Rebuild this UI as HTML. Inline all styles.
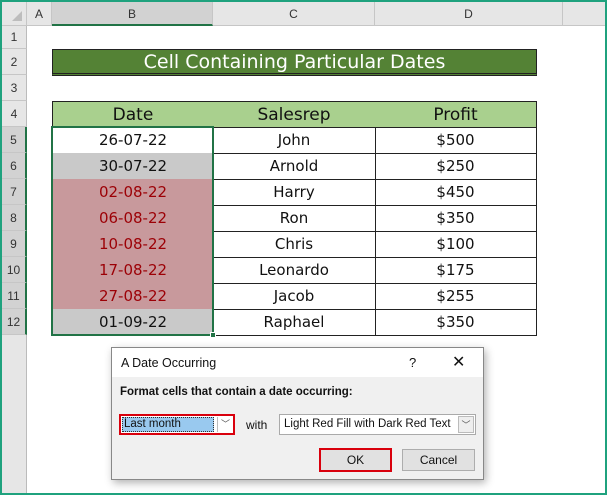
<!DOCTYPE html>
<html><head><meta charset="utf-8"><style>
*{margin:0;padding:0;box-sizing:border-box}
body{width:607px;height:495px;position:relative;overflow:hidden;background:#fff;font-family:"Liberation Sans",sans-serif}
.a{position:absolute}
.frame{left:0;top:0;width:607px;height:495px;border:2px solid #1fa27e;z-index:50;pointer-events:none}
.ch{top:2px;height:24px;background:#e6e6e6;border-bottom:1px solid #c6c6c6;border-right:1px solid #c6c6c6;font-size:12px;color:#333;text-align:center;line-height:24px}
.rh{left:2px;width:25px;background:#e6e6e6;border-bottom:1px solid #c6c6c6;border-right:1px solid #bbb;font-size:12px;color:#333;text-align:center}
.c{font-family:"Comic Sans MS","DejaVu Sans",sans-serif;font-size:15px;text-align:center;border-right:1px solid #222;border-bottom:1px solid #222;color:#111}
.dlg{font-family:"Liberation Sans",sans-serif;font-size:12px;color:#111}
</style></head><body>
<div class="a frame"></div>
<!-- column headers -->
<div class="a ch" style="left:2px;width:25px"></div>
<div class="a" style="left:12px;top:11px;width:0;height:0;border-left:10px solid transparent;border-bottom:10px solid #bdbdbd"></div>
<div class="a ch" style="left:27px;width:25px">A</div>
<div class="a ch" style="left:52px;width:161px;background:#d2d2d2;border-bottom:2px solid #217346">B</div>
<div class="a ch" style="left:213px;width:162px">C</div>
<div class="a ch" style="left:375px;width:188px">D</div>
<div class="a ch" style="left:563px;width:42px;border-right:none"></div>
<!-- row headers -->
<div class="a rh" style="top:26px;height:23px;line-height:23px">1</div>
<div class="a rh" style="top:49px;height:26px;line-height:26px">2</div>
<div class="a rh" style="top:75px;height:26px;line-height:26px">3</div>
<div class="a rh" style="top:101px;height:26px;line-height:26px">4</div>
<div class="a rh" style="top:127px;height:26px;line-height:26px;background:#d2d2d2;border-right:2px solid #217346">5</div>
<div class="a rh" style="top:153px;height:26px;line-height:26px;background:#d2d2d2;border-right:2px solid #217346">6</div>
<div class="a rh" style="top:179px;height:26px;line-height:26px;background:#d2d2d2;border-right:2px solid #217346">7</div>
<div class="a rh" style="top:205px;height:26px;line-height:26px;background:#d2d2d2;border-right:2px solid #217346">8</div>
<div class="a rh" style="top:231px;height:26px;line-height:26px;background:#d2d2d2;border-right:2px solid #217346">9</div>
<div class="a rh" style="top:257px;height:26px;line-height:26px;background:#d2d2d2;border-right:2px solid #217346">10</div>
<div class="a rh" style="top:283px;height:26px;line-height:26px;background:#d2d2d2;border-right:2px solid #217346">11</div>
<div class="a rh" style="top:309px;height:26px;line-height:26px;background:#d2d2d2;border-right:2px solid #217346">12</div>
<div class="a rh" style="top:335px;height:158px;border-bottom:none"></div>
<!-- title -->
<div class="a c" style="left:52px;top:49px;width:485px;height:27px;background:#548235;color:#fff;font-size:19px;line-height:24px;border:1px solid #222;border-bottom:3px double #222">Cell Containing Particular Dates</div>
<!-- header row -->
<div class="a c" style="left:52px;top:101px;width:162px;height:27px;background:#a9d08e;font-size:17px;line-height:26px;border-left:1px solid #222;border-top:1px solid #222">Date</div>
<div class="a c" style="left:213px;top:101px;width:163px;height:27px;background:#a9d08e;font-size:17px;line-height:26px;border-top:1px solid #222">Salesrep</div>
<div class="a c" style="left:375px;top:101px;width:162px;height:27px;background:#a9d08e;font-size:17px;line-height:26px;border-top:1px solid #222">Profit</div>
<!-- data rows -->
<div class="a" style="left:52px;top:127px">
<div style="position:relative">
</div></div>
<div class="a c" style="left:52px;top:127px;width:162px;height:27px;line-height:26px;background:#fff;border-left:1px solid #222">26-07-22</div>
<div class="a c" style="left:52px;top:153px;width:162px;height:27px;line-height:26px;background:#c9c9c9;border-left:1px solid #222">30-07-22</div>
<div class="a c" style="left:52px;top:179px;width:162px;height:27px;line-height:26px;background:#c8999c;color:#9c0006;border-left:1px solid #222">02-08-22</div>
<div class="a c" style="left:52px;top:205px;width:162px;height:27px;line-height:26px;background:#c8999c;color:#9c0006;border-left:1px solid #222">06-08-22</div>
<div class="a c" style="left:52px;top:231px;width:162px;height:27px;line-height:26px;background:#c8999c;color:#9c0006;border-left:1px solid #222">10-08-22</div>
<div class="a c" style="left:52px;top:257px;width:162px;height:27px;line-height:26px;background:#c8999c;color:#9c0006;border-left:1px solid #222">17-08-22</div>
<div class="a c" style="left:52px;top:283px;width:162px;height:27px;line-height:26px;background:#c8999c;color:#9c0006;border-left:1px solid #222">27-08-22</div>
<div class="a c" style="left:52px;top:309px;width:162px;height:27px;line-height:26px;background:#c9c9c9;border-left:1px solid #222">01-09-22</div>

<div class="a c" style="left:213px;top:127px;width:163px;height:27px;line-height:26px">John</div>
<div class="a c" style="left:213px;top:153px;width:163px;height:27px;line-height:26px">Arnold</div>
<div class="a c" style="left:213px;top:179px;width:163px;height:27px;line-height:26px">Harry</div>
<div class="a c" style="left:213px;top:205px;width:163px;height:27px;line-height:26px">Ron</div>
<div class="a c" style="left:213px;top:231px;width:163px;height:27px;line-height:26px">Chris</div>
<div class="a c" style="left:213px;top:257px;width:163px;height:27px;line-height:26px">Leonardo</div>
<div class="a c" style="left:213px;top:283px;width:163px;height:27px;line-height:26px">Jacob</div>
<div class="a c" style="left:213px;top:309px;width:163px;height:27px;line-height:26px">Raphael</div>

<div class="a c" style="left:375px;top:127px;width:162px;height:27px;line-height:26px">$500</div>
<div class="a c" style="left:375px;top:153px;width:162px;height:27px;line-height:26px">$250</div>
<div class="a c" style="left:375px;top:179px;width:162px;height:27px;line-height:26px">$450</div>
<div class="a c" style="left:375px;top:205px;width:162px;height:27px;line-height:26px">$350</div>
<div class="a c" style="left:375px;top:231px;width:162px;height:27px;line-height:26px">$100</div>
<div class="a c" style="left:375px;top:257px;width:162px;height:27px;line-height:26px">$175</div>
<div class="a c" style="left:375px;top:283px;width:162px;height:27px;line-height:26px">$255</div>
<div class="a c" style="left:375px;top:309px;width:162px;height:27px;line-height:26px">$350</div>
<!-- selection border -->
<div class="a" style="left:51px;top:126px;width:163px;height:210px;border:2px solid #217346"></div>
<div class="a" style="left:210px;top:332px;width:6px;height:6px;background:#217346;border:1px solid #fff"></div>
<!-- dialog -->
<div class="a dlg" style="left:111px;top:347px;width:373px;height:133px;background:#f0f0f0;border:1px solid #888;box-shadow:2px 3px 8px rgba(0,0,0,.3)">
  <div class="a" style="left:0;top:0;width:371px;height:29px;background:#fff;font-size:12.5px;line-height:30px;padding-left:9px">A Date Occurring</div>
  <div class="a" style="left:297px;top:7px;font-size:13px">?</div>
  <div class="a" style="left:340px;top:4px;font-size:16px">✕</div>
  <div class="a" style="left:8px;top:38px;font-weight:bold;font-size:11.5px">Format cells that contain a date occurring:</div>
  <div class="a" style="left:7px;top:66px;width:116px;height:21px;border:2px solid #d9000d;background:#fff">
    <div class="a" style="left:1px;top:1px;width:92px;height:15px;background:#99c9ef;border:1px dotted #333;line-height:13px;font-size:11.5px;padding-left:1px">Last month</div>
    <div class="a" style="left:96px;top:1px;width:16px;height:15px;border-left:1px solid #bbb;text-align:center;font-size:9px;color:#555;line-height:14px">﹀</div>
  </div>
  <div class="a" style="left:134px;top:70px;font-size:12px">with</div>
  <div class="a" style="left:167px;top:66px;width:197px;height:21px;border:1px solid #aaa;background:#fff;font-size:11.5px;line-height:19px;padding-left:4px">Light Red Fill with Dark Red Text
    <div class="a" style="left:178px;top:1px;width:16px;height:17px;border:1px solid #bbb;background:#eee;text-align:center;font-size:9px;color:#555;line-height:16px">﹀</div>
  </div>
  <div class="a" style="left:207px;top:100px;width:73px;height:24px;border:2px solid #d9000d;background:#e1e1e1;text-align:center;line-height:20px;font-size:12px">OK</div>
  <div class="a" style="left:290px;top:101px;width:73px;height:22px;border:1px solid #adadad;background:#e1e1e1;text-align:center;line-height:20px;font-size:12px">Cancel</div>
</div>
</body></html>
